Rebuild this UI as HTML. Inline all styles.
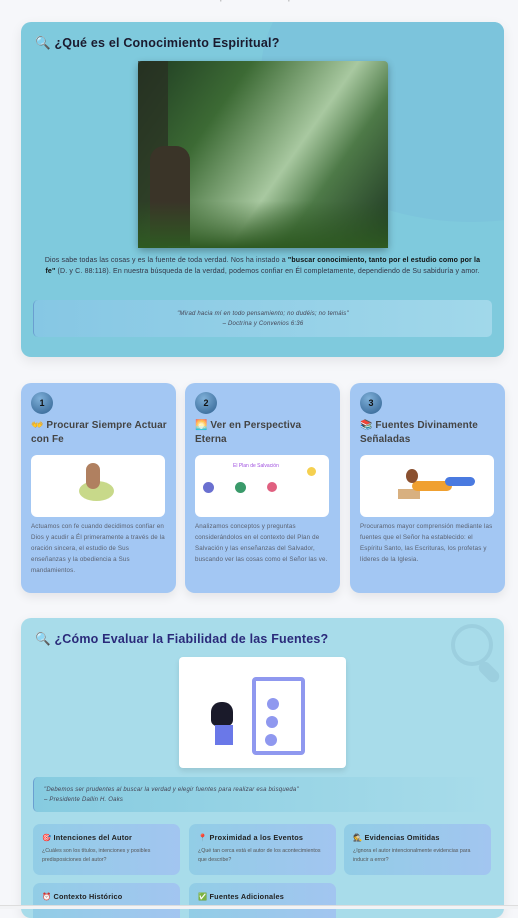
<!DOCTYPE html>
<html><head><meta charset="utf-8"><style>
*{margin:0;padding:0;box-sizing:border-box}
body{width:518px;height:909px;overflow:hidden;background:#f6f7fa;font-family:"Liberation Sans","DejaVu Sans",sans-serif;position:relative;color:#333}
.abs{position:absolute}
.card{position:absolute;border-radius:10px;box-shadow:0 4px 12px rgba(0,0,0,.08)}
h2{font-size:12.5px;font-weight:bold;color:#1a1a2e;position:absolute;letter-spacing:.2px}
.q{position:absolute;border-left:1.5px solid #6a9fd0;border-radius:5px;font-style:italic;font-size:6px;color:#445;letter-spacing:.2px}
.sc{position:absolute;background:#a3c7f3;border-radius:10px;width:155px;height:210px;top:383px;box-shadow:0 4px 10px rgba(0,0,0,.08)}
.num{position:absolute;left:10px;top:9px;width:22px;height:22px;border-radius:50%;background:radial-gradient(circle at 40% 30%,#7fb0d9,#2d5f8f);font-size:9px;font-weight:bold;color:#111;text-align:center;line-height:22px}
.st{position:absolute;left:10px;top:36px;font-size:10px;font-weight:bold;color:#444;line-height:14px;width:140px;letter-spacing:.1px}
.si{position:absolute;left:10px;top:72px;width:134px;height:62px;background:#fff;border-radius:6px}
.sp{position:absolute;left:10px;top:138px;font-size:6.2px;line-height:11px;color:#5a6170;width:134px;letter-spacing:.15px}
.g{position:absolute;border-radius:7px;background:linear-gradient(90deg,#92cde6,#a2c5f0);height:51px;width:147px;padding:9px 9px}
.g b{display:block;font-size:7.3px;color:#222;margin-bottom:5px;letter-spacing:.2px}
.g span{font-size:5.3px;color:#555;line-height:9px;display:block}
</style></head><body>
<div class="abs" style="top:-5px;width:518px;text-align:center;font-size:7px;color:#888">Adquirir Conocimiento Espiritual</div>

<div class="card" style="left:21px;top:22px;width:483px;height:335px;background:#7fcadd;overflow:hidden">
<div class="abs" style="left:240px;top:-100px;width:420px;height:300px;border-radius:50%;background:#7cc4dc"></div>
<h2 style="left:14px;top:14px"><span style="color:#7a4fa0">🔍</span> ¿Qué es el Conocimiento Espiritual?</h2>
<div class="abs" style="left:117px;top:39px;width:250px;height:187px;border-radius:4px;background:linear-gradient(125deg,#1e3a22 0%,#3c6a34 30%,#a8c8a0 58%,#4e7a48 72%,#1b3220 100%);box-shadow:0 3px 8px rgba(0,0,0,.3)">
<div class="abs" style="left:0;top:0;width:30px;height:187px;background:#2a2e22;opacity:.7"></div>
<div class="abs" style="left:12px;top:85px;width:40px;height:100px;background:#3a3428;border-radius:14px 14px 0 0"></div>
<div class="abs" style="left:0;top:140px;width:250px;height:47px;background:linear-gradient(#3d6a2a00,#2e5a22)"></div>
</div>
<p class="abs" style="left:22px;top:233px;width:439px;text-align:center;font-size:7px;line-height:11px;color:#334;letter-spacing:.15px">Dios sabe todas las cosas y es la fuente de toda verdad. Nos ha instado a <b style="color:#111">"buscar conocimiento, tanto por el estudio como por la fe"</b> (D. y C. 88:118). En nuestra búsqueda de la verdad, podemos confiar en Él completamente, dependiendo de Su sabiduría y amor.</p>
<div class="q" style="left:12px;top:278px;width:459px;height:37px;background:linear-gradient(90deg,#86c7e4,#a1d8ea);text-align:center;padding-top:9px;line-height:10px">"Mirad hacia mí en todo pensamiento; no dudéis; no temáis"<br>– Doctrina y Convenios 6:36</div>
</div>

<div class="sc" style="left:21px"><div class="num">1</div><div class="st">👐 Procurar Siempre Actuar con Fe</div><div class="si"><div class="abs" style="left:48px;top:26px;width:35px;height:20px;border-radius:50%;background:#c8d98a"></div><div class="abs" style="left:55px;top:8px;width:14px;height:26px;border-radius:7px;background:#b08060"></div></div><div class="sp">Actuamos con fe cuando decidimos confiar en Dios y acudir a Él primeramente a través de la oración sincera, el estudio de Sus enseñanzas y la obediencia a Sus mandamientos.</div></div>
<div class="sc" style="left:185px"><div class="num">2</div><div class="st" style="width:118px">🌅 Ver en Perspectiva Eterna</div><div class="si"><div class="abs" style="left:38px;top:8px;font-size:5px;color:#a050e0">El Plan de Salvación</div><div class="abs" style="left:8px;top:27px;width:11px;height:11px;border-radius:50%;background:#6a70d0"></div><div class="abs" style="left:40px;top:27px;width:11px;height:11px;border-radius:50%;background:#3a9a6a"></div><div class="abs" style="left:72px;top:27px;width:10px;height:10px;border-radius:50%;background:#e06080"></div><div class="abs" style="left:112px;top:12px;width:9px;height:9px;border-radius:50%;background:#f5d050"></div></div><div class="sp">Analizamos conceptos y preguntas considerándolos en el contexto del Plan de Salvación y las enseñanzas del Salvador, buscando ver las cosas como el Señor las ve.</div></div>
<div class="sc" style="left:350px"><div class="num">3</div><div class="st">📚 Fuentes Divinamente Señaladas</div><div class="si"><div class="abs" style="left:38px;top:34px;width:22px;height:10px;background:#d8b080"></div><div class="abs" style="left:52px;top:26px;width:40px;height:10px;border-radius:5px;background:#f0a030"></div><div class="abs" style="left:85px;top:22px;width:30px;height:9px;border-radius:5px;background:#4a7ae0"></div><div class="abs" style="left:46px;top:14px;width:12px;height:14px;border-radius:50%;background:#8a5030"></div></div><div class="sp">Procuramos mayor comprensión mediante las fuentes que el Señor ha establecido: el Espíritu Santo, las Escrituras, los profetas y líderes de la Iglesia.</div></div>

<div class="card" style="left:21px;top:618px;width:483px;height:300px;background:#a8dcea;overflow:hidden">
<div class="abs" style="left:430px;top:6px;width:42px;height:42px;border:4px solid #9ccfdf;border-radius:50%"></div>
<div class="abs" style="left:462px;top:42px;width:12px;height:24px;background:#9ccfdf;border-radius:6px;transform:rotate(-45deg)"></div>
<h2 style="left:14px;top:14px;color:#2a2a7a"><span style="color:#7a4fa0">🔍</span> ¿Cómo Evaluar la Fiabilidad de las Fuentes?</h2>
<div class="abs" style="left:158px;top:39px;width:167px;height:111px;background:#fff;border-radius:4px;box-shadow:0 3px 6px rgba(0,0,0,.1)">
<div class="abs" style="left:73px;top:20px;width:53px;height:78px;border:4px solid #8f98ef;border-radius:4px;background:#fff"></div>
<div class="abs" style="left:88px;top:41px;width:12px;height:12px;border-radius:50%;background:#8f98ef"></div>
<div class="abs" style="left:87px;top:59px;width:12px;height:12px;border-radius:50%;background:#8f98ef"></div>
<div class="abs" style="left:86px;top:77px;width:12px;height:12px;border-radius:50%;background:#8f98ef"></div>
<div class="abs" style="left:32px;top:45px;width:22px;height:24px;border-radius:10px 10px 6px 6px;background:#1a1a2a"></div>
<div class="abs" style="left:36px;top:68px;width:18px;height:20px;background:#6a78e8"></div>
</div>
<div class="q" style="left:12px;top:159px;width:459px;height:35px;background:linear-gradient(90deg,#86cbe0,#a8dcea);padding:8px 0 0 10px;line-height:10px">"Debemos ser prudentes al buscar la verdad y elegir fuentes para realizar esa búsqueda"<br>– Presidente Dallin H. Oaks</div>
<div class="g" style="left:12px;top:206px"><b>🎯 Intenciones del Autor</b><span>¿Cuáles son los títulos, intenciones y posibles predisposiciones del autor?</span></div>
<div class="g" style="left:168px;top:206px"><b>📍 Proximidad a los Eventos</b><span>¿Qué tan cerca está el autor de los acontecimientos que describe?</span></div>
<div class="g" style="left:323px;top:206px"><b>🕵 Evidencias Omitidas</b><span>¿Ignora el autor intencionalmente evidencias para inducir a error?</span></div>
<div class="g" style="left:12px;top:265px"><b>⏰ Contexto Histórico</b></div>
<div class="g" style="left:168px;top:265px"><b>✅ Fuentes Adicionales</b></div>
</div>
<div class="abs" style="left:0;top:905px;width:518px;height:4px;background:#f2f3f5;border-top:1px solid #ddd"></div>
</body></html>
